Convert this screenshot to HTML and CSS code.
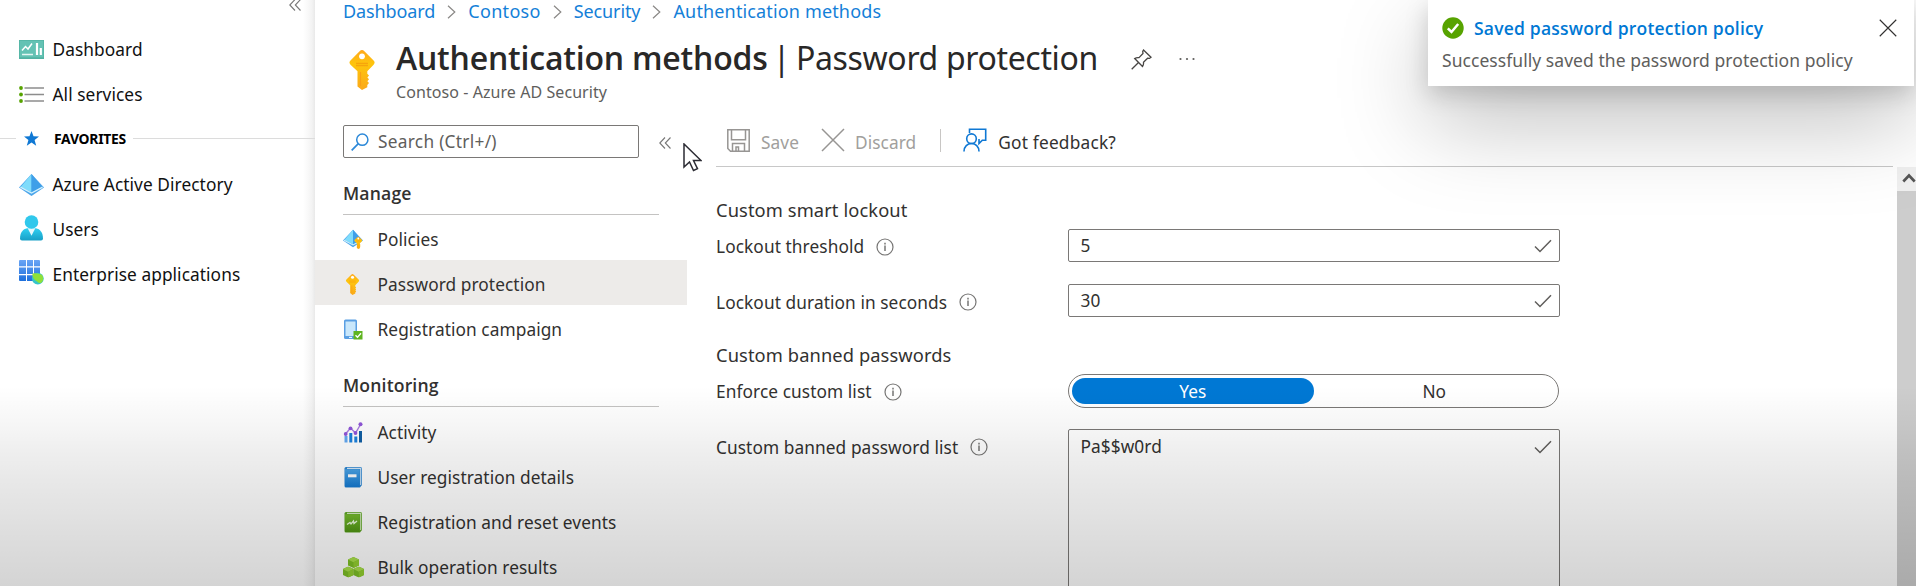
FILE: index.html
```html
<!DOCTYPE html>
<html lang="en">
<head>
<meta charset="utf-8">
<title>Authentication methods | Password protection</title>
<link rel="stylesheet" href="styles.css">
</head>
<body>
<svg class="defs" aria-hidden="true">
  <defs>
    <linearGradient id="gKey" x1="0" y1="0" x2="0" y2="1"><stop offset="0" stop-color="#ffa81c"/><stop offset=".35" stop-color="#fec50c"/><stop offset="1" stop-color="#fba91a"/></linearGradient>
    <linearGradient id="gUser" x1="0" y1="0" x2="0" y2="1"><stop offset="0" stop-color="#2fd0f2"/><stop offset="1" stop-color="#189fc6"/></linearGradient>
    <linearGradient id="gGrid" x1="0" y1="0" x2="0" y2="1"><stop offset="0" stop-color="#6aa5f5"/><stop offset="1" stop-color="#1d6fdc"/></linearGradient>
    <linearGradient id="gBlue" x1="0" y1="0" x2="0" y2="1"><stop offset="0" stop-color="#4aa3e6"/><stop offset="1" stop-color="#1479d0"/></linearGradient>
    <linearGradient id="gGreen" x1="0" y1="0" x2="0" y2="1"><stop offset="0" stop-color="#76bc2d"/><stop offset="1" stop-color="#4f9413"/></linearGradient>
    <symbol id="pyramid" viewBox="0 0 25 22">
      <path d="M12.5 0 25 13.6 12.5 22 0 13.6z" fill="#4ba5ea"/>
      <path d="M12.5 0 1.8 12.9l10.700 5.300z" fill="#7fdcfb"/>
      <path d="M12.500 0 23.200 12.900l-10.700 5.300z" fill="#3f9fe8"/>
      <path d="M1.400 13.200 12.500 19l11.100-5.800" fill="none" stroke="#d2f1fd" stroke-width="1.300"/>
    </symbol>
    <symbol id="key" viewBox="0 0 26 40">
      <path d="M10.600 1.200q2.400-2.300 4.800 0l9.200 9.200q2 2.200 0 4.400l-6.300 6.400v2.600l1.700 1.700-1.600 1.900 1.600 1.900-1.600 1.900 1.600 1.900-1.700 2v2.200L13 40l-4.500-3.600V21.200L1.500 14.800q-2.100-2.200 0-4.400z" fill="url(#gKey)"/>
      <circle cx="13" cy="6.300" r="2.900" fill="#fff"/>
      <path d="M7 13.300h12M7 15.500h12" stroke="#f7a40c" stroke-width="1.300"/>
      <path d="M11.500 22v14" stroke="#f8a016" stroke-width="1.200"/>
    </symbol>
    <symbol id="chev2" viewBox="0 0 12 12"><path d="M6 .5.800 6 6 11.500M11.500.5 6.300 6l5.200 5.500" fill="none" stroke="#777" stroke-width="1.100"/></symbol>
    <symbol id="crumb" viewBox="0 0 9 14"><path d="m1 .8 6.800 6.200L1 13.200" fill="none" stroke="#8a8886" stroke-width="1.200"/></symbol>
    <symbol id="info" viewBox="0 0 18 18"><circle cx="9" cy="9" r="8" fill="none" stroke="#767574" stroke-width="1.200"/><path d="M9 7.600v5.400M9 4.700v1.700" stroke="#767574" stroke-width="1.500"/></symbol>
    <symbol id="check" viewBox="0 0 18 14"><path d="m1 7.500 5 5L17 1.200" fill="none" stroke="#605e5c" stroke-width="1.500"/></symbol>
    <symbol id="cross" viewBox="0 0 24 24"><path d="m1 1 22 22M23 1 1 23" fill="none" stroke="currentColor" stroke-width="1.500"/></symbol>
    <symbol id="cube" viewBox="0 0 11 11"><path d="M5.500 0 11 2.600v5.800L5.500 11 0 8.400V2.600z" fill="#7dbf26"/><path d="M5.500 0 11 2.600 5.500 5.300 0 2.600z" fill="#a9e04b"/><path d="M5.500 5.300V11L11 8.400V2.600z" fill="#93d030"/></symbol>
  </defs>
</svg>

<div class="portal">
  <nav class="sidebar">
    <div class="sidebar-top"><svg width="12" height="12"><use href="#chev2"/></svg></div>
    <a class="fav-item">
      <svg class="ico" width="25" height="19" viewBox="0 0 25 19"><rect width="25" height="19" fill="#51b2a3"/><rect x=".7" y=".7" width="23.600" height="16.600" fill="#64c2b4"/><path d="m3 10.500 3.500-4 2.500 2.500 4-5.500" fill="none" stroke="#fff" stroke-width="1.500"/><path d="M3 14.500h11" stroke="#e4f6f3" stroke-width="1.500"/><path d="M18 3v12M21.800 8v7" stroke="#fff" stroke-width="2.200"/></svg>
      <span>Dashboard</span></a>
    <a class="fav-item">
      <svg class="ico" width="25" height="17" viewBox="0 0 25 17"><path d="M5.500 2H25M5.500 8.500H25M5.500 15H25" stroke="#8d8d8d" stroke-width="1.600"/><g fill="#57a300"><circle cx="2" cy="2" r="1.900"/><circle cx="2" cy="8.500" r="1.900"/><circle cx="2" cy="15" r="1.900"/></g></svg>
      <span>All services</span></a>
    <div class="fav-head"><i class="rule-l"></i>
      <svg width="15" height="15" viewBox="0 0 15 15"><path d="M7.500 0 9.500 5.300 15 5.500 10.600 9 12.200 14.700 7.500 11.500 2.800 14.700 4.400 9 0 5.500 5.500 5.300z" fill="#0f78d4"/></svg>
      <b>FAVORITES</b><i class="rule-r"></i></div>
    <a class="fav-item">
      <svg class="ico" width="25" height="22"><use href="#pyramid"/></svg>
      <span>Azure Active Directory</span></a>
    <a class="fav-item">
      <svg class="ico ico-user" width="25" height="26" viewBox="0 0 25 26"><path d="M1 23.500C1 17.500 4 14 8 13.200h9c4 .8 7 4.300 7 10.300q0 2-2 2H3q-2 0-2-2z" fill="url(#gUser)"/><path d="m8.700 13.200 3.800 7.600 3.800-7.600z" fill="#e8f8fc"/><circle cx="12.500" cy="7" r="6.800" fill="#30c8ec"/></svg>
      <span>Users</span></a>
    <a class="fav-item">
      <svg class="ico ico-ent" width="25" height="25" viewBox="0 0 25 25"><path d="M1 0h6v6.300H0V1q0-1 1-1zM8 0h6v6.300H8zM15 0h5q1 0 1 1v5.300h-6zM0 7.500h7V14H0zM8 7.500h6V14H8zM15 7.500h6V14h-6zM0 15.200h7V21H1q-1 0-1-1zM8 15.200h6V21H8zM15 15.200h6V21h-6z" fill="url(#gGrid)"/><circle cx="18.800" cy="18.600" r="5.900" fill="#36c5c9"/><path d="M13.500 13.600c3.500-1 7 0 9.500 1.400 2 3 1.500 6-1 8-2 .2-3.500-.6-4.500-2-2.500-1-4.500-4-4-7.400z" fill="#8fe03a"/></svg>
      <span>Enterprise applications</span></a>
  </nav>

  <main class="blade">
    <div class="crumbs"><a>Dashboard</a><svg width="9" height="14"><use href="#crumb"/></svg><a class="c2">Contoso</a><svg width="9" height="14"><use href="#crumb"/></svg><a class="c3">Security</a><svg width="9" height="14"><use href="#crumb"/></svg><a class="c4">Authentication methods</a></div>
    <header class="head">
      <svg class="head-key" width="26" height="40"><use href="#key"/></svg>
      <div class="head-text">
        <h1><b>Authentication methods</b><span class="bar">|</span><span class="sub">Password protection</span></h1>
        <p>Contoso - Azure AD Security</p>
      </div>
      <svg class="pin" width="21" height="21" viewBox="0 0 21 21"><path d="M12.500 1 20 8.300 18.500 9.400 16.600 9.200 12.500 13.300Q12.800 16 11.500 17.500L3.700 9.500Q5.500 8.300 8 8.600L12 4.500 11.700 2.300zM7.500 13.500.7 20.300" fill="none" stroke="#484644" stroke-width="1.300"/></svg>
      <svg class="dots" width="16" height="4" viewBox="0 0 16 4" fill="#605e5c"><circle cx="1.500" cy="2" r="1.100"/><circle cx="8" cy="2" r="1.100"/><circle cx="14.500" cy="2" r="1.100"/></svg>
    </header>

    <div class="body">
      <aside class="menu">
        <div class="search-row">
          <div class="search"><svg width="18" height="18" viewBox="0 0 18 18"><circle cx="11.300" cy="6.700" r="5.600" fill="none" stroke="#2b88d8" stroke-width="1.500"/><path d="M7.300 10.700.7 17.300" stroke="#2b88d8" stroke-width="1.700"/></svg><span>Search (Ctrl+/)</span></div>
          <svg width="12" height="12"><use href="#chev2"/></svg>
        </div>
        <h2>Manage</h2>
        <a class="item"><svg width="21" height="20" viewBox="0 0 21 20"><use href="#pyramid" width="20" height="19"/><use href="#key" x="11" y="7.500" width="8.500" height="12.500"/></svg><span>Policies</span></a>
        <a class="item on"><svg width="21" height="21" viewBox="0 0 21 21"><use href="#key" x="2" width="15" height="21"/></svg><span>Password protection</span></a>
        <a class="item"><svg width="21" height="21" viewBox="0 0 21 21"><rect x="1" y=".5" width="13" height="19.500" rx="1.500" fill="#5a9fe3"/><rect x="2.500" y="2.500" width="10" height="14.500" fill="#c9e7fb"/><path d="M6 18.400h3" stroke="#fff"/><rect x="10.500" y="12" width="9" height="8.500" fill="#5fb420"/><path d="m12.500 16.300 2 2 3.500-4" fill="none" stroke="#fff" stroke-width="1.300"/></svg><span>Registration campaign</span></a>
        <h2 class="second">Monitoring</h2>
        <a class="item"><svg width="21" height="21" viewBox="0 0 21 21"><path d="M1.500 14h3v6.500h-3z" fill="#63a8f0"/><path d="M6.300 11h3v9.500h-3z" fill="#1a80dc"/><path d="M11.300 14.500h3v6h-3z" fill="#1a80dc"/><path d="M16 9h3v11.500h-3z" fill="#115ea3"/><path d="M2.500 12 7.500 6 12.500 11 17.500 2.500" fill="none" stroke="#a87be0" stroke-width="1.400"/><g fill="#8f55d8"><circle cx="2.700" cy="12" r="1.900"/><circle cx="7.500" cy="6.300" r="1.900"/><circle cx="12.500" cy="11" r="1.900"/><circle cx="17.500" cy="2.300" r="2"/></g></svg><span>Activity</span></a>
        <a class="item"><svg width="21" height="21" viewBox="0 0 21 21"><path d="M3 0h14.500q1.500 0 1.500 1.500V18l-2 2.500H3q-1.500 0-1.500-1.500V1.500Q1.500 0 3 0z" fill="#2c86d2"/><path d="M4 1.400h13.700V18" fill="none" stroke="#d7eafa" stroke-width="1.100"/><rect x="2" y="2.300" width="14.700" height="17.700" fill="url(#gBlue)"/><rect x="5" y="7.300" width="8.500" height="3" fill="#fff"/></svg><span>User registration details</span></a>
        <a class="item"><svg width="21" height="21" viewBox="0 0 21 21"><path d="M3 0h14.500q1.500 0 1.500 1.500V18l-2 2.500H3q-1.500 0-1.500-1.500V1.500Q1.500 0 3 0z" fill="#5fa626"/><path d="M4 1.400h13.700V18" fill="none" stroke="#d7edc4" stroke-width="1.100"/><rect x="2" y="2.300" width="14.700" height="17.700" fill="url(#gGreen)"/><path d="m4 12.500 3-2 1 1.500 2.500-3 .5 2.500L14 9" fill="none" stroke="#e9f8dc" stroke-width="1.300"/></svg><span>Registration and reset events</span></a>
        <a class="item"><svg width="21" height="21" viewBox="0 0 21 21"><use href="#cube" x="5" y="0" width="11" height="11"/><use href="#cube" x="-.3" y="9.500" width="11" height="11"/><use href="#cube" x="10.300" y="9.500" width="11" height="11"/></svg><span>Bulk operation results</span></a>
      </aside>

      <section class="content">
        <div class="toolbar">
          <svg class="t-save" width="23" height="23" viewBox="0 0 23 23" fill="none" stroke="#979593" stroke-width="1.500"><path d="M.8.8h21.400v21.400H3.500L.8 19.500zM4.500.8v10h14v-10M5.500 22v-7.500h12V22M9 22v-4h2.500v4"/></svg>
          <span class="off">Save</span>
          <svg class="t-x" width="24" height="24"><use href="#cross"/></svg>
          <span class="off">Discard</span>
          <i class="sep"></i>
          <svg class="t-fb" width="24" height="24" viewBox="0 0 24 24" fill="none" stroke="#0f78d4" stroke-width="1.600"><path d="M6.500 5V1.300h16.200v11h-3.400l-3.300 3.300V11"/><circle cx="8.500" cy="10.700" r="4.800"/><path d="M1 23.500c0-5 3.500-8 7.500-8s7.500 3 7.500 8"/></svg>
          <span class="fb">Got feedback?</span>
        </div>
        <div class="form">
          <h3>Custom smart lockout</h3>
          <div class="row"><label>Lockout threshold<svg width="18" height="18"><use href="#info"/></svg></label><div class="input"><span>5</span><svg width="18" height="14"><use href="#check"/></svg></div></div>
          <div class="row r2"><label>Lockout duration in seconds<svg width="18" height="18"><use href="#info"/></svg></label><div class="input"><span>30</span><svg width="18" height="14"><use href="#check"/></svg></div></div>
          <h3 class="h3b">Custom banned passwords</h3>
          <div class="row"><label>Enforce custom list<svg width="18" height="18"><use href="#info"/></svg></label><div class="toggle"><span class="yes">Yes</span><span class="no">No</span></div></div>
          <div class="row r2"><label>Custom banned password list<svg width="18" height="18"><use href="#info"/></svg></label><div class="input area"><span>Pa$$w0rd</span><svg width="18" height="14"><use href="#check"/></svg></div></div>
        </div>
      </section>
      <div class="scroll"><div class="up"><svg width="14" height="10" viewBox="0 0 14 10"><path d="m1.300 8.500 5.700-6 5.700 6" fill="none" stroke="#555" stroke-width="2.600"/></svg></div></div>
    </div>
  </main>

  <div class="toast">
    <div class="toast-head">
      <svg width="22" height="22" viewBox="0 0 22 22"><circle cx="11" cy="11" r="10.700" fill="#57a300"/><path d="m5.800 11.300 3.700 3.700 6.700-8" fill="none" stroke="#fff" stroke-width="2.500"/></svg>
      <b>Saved password protection policy</b>
      <svg class="close" width="18" height="18"><use href="#cross"/></svg>
    </div>
    <p>Successfully saved the password protection policy</p>
  </div>
  <svg class="cursor" width="19" height="29" viewBox="0 0 19 29"><path d="M1 1v23l5.500-5 4 8.500 4-1.800-4-8.200H18z" fill="#fff" stroke="#2b2b33" stroke-width="1.500"/></svg>
  <div class="shade"></div>
</div>
</body>
</html>
```
FILE: styles.css
```css
* { box-sizing: border-box; }
body {
  margin: 0;
  font-family: "Noto Sans", "Open Sans", sans-serif;
  font-size: 17.300px;
  letter-spacing: .07px;
  color: #323130;
  background: #fff;
}
svg { display: block; flex: none; }
h1, h2, h3, p { margin: 0; font-weight: 400; }
.defs { position: absolute; width: 0; height: 0; }
.portal { position: relative; display: flex; width: 1916px; height: 586px; overflow: hidden; white-space: nowrap; }

/* global navigation */
.sidebar {
  width: 315px;
  flex: none;
  color: #111;
  background: linear-gradient(to left, #e9e9e9 0, #f3f3f3 3px, #fafafa 8px, #fff 12px);
}
.sidebar-top { height: 27px; display: flex; justify-content: flex-end; padding-right: 14px; }
.sidebar-top svg { margin-top: -1px; }
.fav-item { display: flex; align-items: center; height: 45px; padding-left: 19px; gap: 8.500px; }
.fav-item .ico-ent { margin-top: -4px; }
.fav-item .ico-user { margin-top: -3px; }
.fav-head { display: flex; align-items: center; height: 45px; padding-bottom: 3px; }
.fav-head b { font-size: 13.900px; margin-left: 15px; font-weight: 700; letter-spacing: -.25px; color: #000; }
.rule-l { width: 16px; height: 1px; background: #dcdcdc; margin-right: 8px; }
.rule-r { flex: 1; height: 1px; background: #dcdcdc; margin-left: 7px; }

/* blade */
.blade { flex: 1; min-width: 0; display: flex; flex-direction: column; }
.crumbs { display: flex; align-items: center; height: 24px; padding: 0 0 2px 28px; font-size: 18px; color: #1480d8; }
.crumbs a { letter-spacing: -.1px; }
.crumbs svg { margin: 2px 12px 0; }
.crumbs .c2 { letter-spacing: .3px; }
.crumbs .c4 { letter-spacing: .15px; }
.head { display: flex; align-items: flex-start; height: 91px; padding-left: 34px; }
.head-key { margin-top: 26px; }
.head-text { margin-left: 21px; width: 702px; }
h1 { display: flex; font-size: 32px; line-height: 44px; margin-top: 12px; color: #292827; }
h1 b { font-family: "Open Sans", "Noto Sans", sans-serif; font-weight: 600; letter-spacing: -.2px; width: 371px; }
h1 .bar { width: 29px; text-align: center; }
h1 .sub { letter-spacing: -.35px; }
.head p { font-size: 16px; line-height: 24px; color: #605e5c; }
.pin { margin: 25px 0 0 33px; }
.dots { margin: 33px 0 0 27px; }
.body { flex: 1; min-height: 0; display: flex; }

/* resource menu */
.menu { width: 372px; flex: none; padding-top: 10px; }
.search-row { display: flex; align-items: center; gap: 20px; padding-left: 28px; }
.search { width: 296px; height: 33px; border: 1px solid #7a7876; border-radius: 2px; display: flex; align-items: center; padding-left: 7px; gap: 9px; color: #605e5c; letter-spacing: .28px; }
.search-row > svg { margin-top: 2px; }
.menu h2 { margin: 21px 28px 0; padding-bottom: 7px; width: 316px; height: 36px; border-bottom: 1px solid #c4c3c2; line-height: 28px; font-family: "Open Sans", "Noto Sans", sans-serif; font-weight: 600; font-size: 17.600px; letter-spacing: .15px; }
.menu h2.second { margin-top: 21px; height: 36px; margin-bottom: 1px; }
.item { display: flex; align-items: center; height: 45px; padding: 3px 0 0 28px; gap: 13.500px; }
.item.on { background: #edebe9; }

/* content pane */
.content { width: 1206px; flex: none; padding-left: 29px; }
.toolbar { display: flex; align-items: center; height: 52px; width: 1177px; border-bottom: 1px solid #c8c8c8; padding-left: 11px; }
.toolbar span { padding-top: 3px; }
.toolbar .off { color: #a19f9d; }
.toolbar .fb { letter-spacing: .2px; }
.t-save { margin: 0 11px 1px 0; }
.t-x { margin: 0 10px 1px 22px; color: #979593; }
.sep { width: 1px; height: 23px; background: #c8c6c4; margin: 0 22px 0 24px; }
.t-fb { margin: 0 11px 1px 0; }
.form { padding-top: 30px; }
h3 { font-size: 18.300px; line-height: 25px; height: 32px; letter-spacing: .1px; }
.h3b { margin-top: 25px; height: 32px; }
.row { display: flex; height: 33px; }
.row.r2 { margin-top: 22px; }
label { width: 352px; display: flex; align-items: center; gap: 12px; height: 35px; letter-spacing: .08px; }
.row.r2 label { height: 36px; }
.input { width: 492px; height: 33px; border: 1px solid #7a7876; border-radius: 2px; display: flex; align-items: center; justify-content: space-between; padding: 0 7px 0 11.500px; }
.area { height: 180px; align-items: flex-start; padding-top: 5px; }
.area svg { margin-top: 5px; }
.toggle { width: 491px; height: 34px; border: 1px solid #7a7876; border-radius: 17px; padding: 3px; display: flex; background: #fff; }
.toggle span { flex: 1; display: flex; align-items: center; justify-content: center; }
.toggle .yes { background: #0078d4; color: #fff; border-radius: 13px; }

/* scrollbar */
.scroll { flex: 1; margin: 52px 0 0 4px; background: #cdcdcd; }
.up { height: 24px; background: #f0f0f0; padding: 6px 0 0 5px; }

/* overlays */
.toast { position: absolute; left: 1428px; top: 0; width: 486px; height: 86px; background: #fff; padding: 14px 17px 0 14px; box-shadow: 0 35px 90px rgba(0,0,0,.26), 0 8px 22px rgba(0,0,0,.17); }
.toast-head { display: flex; align-items: center; height: 28px; }
.toast-head b { font-family: "Open Sans", "Noto Sans", sans-serif; font-weight: 600; font-size: 17.500px; color: #0078d4; margin-left: 10px; letter-spacing: .2px; }
.toast .close { margin-left: auto; color: #323130; }
.toast p { font-size: 17.500px; line-height: 24px; margin-top: 6px; color: #605e5c; letter-spacing: .05px; }
.cursor { position: absolute; left: 683px; top: 143px; }
.shade { position: absolute; left: 0; right: 0; top: 386px; bottom: 0; pointer-events: none; background: linear-gradient(rgba(0,0,0,0), rgba(0,0,0,.035) 19%, rgba(0,0,0,.063) 32%, rgba(0,0,0,.09) 47%, rgba(0,0,0,.13) 73%, rgba(0,0,0,.17)); }
```
